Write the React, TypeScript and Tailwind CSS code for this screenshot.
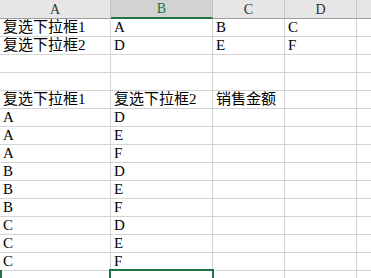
import React from "react";

const cols = [
  { key: "A", w: "w-[111px]" },
  { key: "B", w: "w-[102px]" },
  { key: "C", w: "w-[72px]" },
  { key: "D", w: "w-[72px]" },
  { key: "E", w: "w-[40px]" },
];

const rows: string[][] = [
  ["复选下拉框1", "A", "B", "C"],
  ["复选下拉框2", "D", "E", "F"],
  [],
  [],
  ["复选下拉框1", "复选下拉框2", "销售金额"],
  ["A", "D"],
  ["A", "E"],
  ["A", "F"],
  ["B", "D"],
  ["B", "E"],
  ["B", "F"],
  ["C", "D"],
  ["C", "E"],
  ["C", "F"],
  [],
];

export default function App() {
  return (
    <div className="relative w-[371px] h-[278px] overflow-hidden bg-white text-black font-['Liberation_Serif','DejaVu_Serif','Noto_Sans_CJK_SC',serif]">
      {/* column headers */}
      <div className="flex">
        {cols.map((c) =>
          c.key === "B" ? (
            <div
              key={c.key}
              className={`${c.w} shrink-0 h-[19px] flex items-center justify-center bg-[#d2d2d2] border-r border-[#bdbdbd] border-b-2 border-b-[#217346] text-[14px] text-[#217346]`}
            >
              {c.key}
            </div>
          ) : (
            <div
              key={c.key}
              className={`${c.w} shrink-0 h-[19px] flex items-center justify-center bg-[#e6e6e6] border-r border-[#c6c6c6] border-b border-b-[#9e9e9e] text-[14px] text-[#333]`}
            >
              {c.key === "E" ? "" : c.key}
            </div>
          )
        )}
      </div>

      {/* cells */}
      {rows.map((r, ri) => (
        <div key={ri} className="flex">
          {cols.map((c, ci) => (
            <div
              key={c.key}
              className={`${c.w} shrink-0 h-[18px] flex items-end pl-[3px] pb-[1px] border-r border-b border-[#d4d4d4] text-[15px] leading-[15px] whitespace-nowrap`}
            >
              {r[ci] ?? ""}
            </div>
          ))}
        </div>
      ))}

      {/* active cell B15 */}
      <div className="absolute left-[109px] top-[269px] w-[105px] h-[20px] border-2 border-[#217346]" />
      {/* row header edge for row 15 */}
      <div className="absolute left-0 top-[270px] w-[2px] h-[8px] bg-[#217346]" />
    </div>
  );
}
